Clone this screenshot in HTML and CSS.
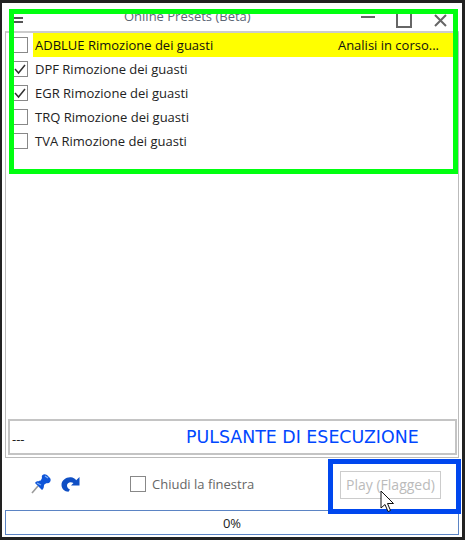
FILE: index.html
```html
<!DOCTYPE html>
<html lang="en">
<head>
  <meta charset="UTF-8">
  <meta name="viewport" content="width=device-width, initial-scale=1.0">
  <title>Online Presets (Beta)</title>
  <link rel="stylesheet" href="styles.css">
</head>
<body>

<div class="window">
  <!-- Title bar -->
  <div class="title-bar">
    <div class="menu-icon"><span></span><span></span></div>
    <div class="title">Online Presets (Beta)</div>
    <div class="win-buttons">
      <div class="win-min"></div>
      <div class="win-max"></div>
      <svg class="win-close" width="13" height="13" viewBox="0 0 13 13">
        <path d="M1 1L12 12M12 1L1 12" stroke="#666" stroke-width="2" fill="none"/>
      </svg>
    </div>
  </div>

  <!-- List and status -->
  <div class="panel">
    <div class="list">
      <div class="row active">
        <div class="check"></div>
        <div class="row-label"><span>ADBLUE Rimozione dei guasti</span><span>Analisi in corso...</span></div>
      </div>
      <div class="row">
        <div class="check">
          <svg width="14" height="14" viewBox="0 0 14 14"><path d="M2 7L5.5 11L12 3" stroke="#333" stroke-width="1.5" fill="none"/></svg>
        </div>
        <div class="row-label"><span>DPF Rimozione dei guasti</span></div>
      </div>
      <div class="row">
        <div class="check">
          <svg width="14" height="14" viewBox="0 0 14 14"><path d="M2 7L5.5 11L12 3" stroke="#333" stroke-width="1.5" fill="none"/></svg>
        </div>
        <div class="row-label"><span>EGR Rimozione dei guasti</span></div>
      </div>
      <div class="row">
        <div class="check"></div>
        <div class="row-label"><span>TRQ Rimozione dei guasti</span></div>
      </div>
      <div class="row">
        <div class="check"></div>
        <div class="row-label"><span>TVA Rimozione dei guasti</span></div>
      </div>
    </div>
    <div class="status">
      <span class="status-text">---</span>
      <span class="status-note">PULSANTE DI ESECUZIONE</span>
    </div>
  </div>

  <!-- Controls -->
  <div class="controls">
    <svg class="pin-icon" width="20" height="20" viewBox="0 0 20 20">
      <path d="M1 19L7 12" stroke="#9a9a9a" stroke-width="1.6" fill="none"/>
      <path d="M4 9C6 6 9 8 10 6L11 4C10 1 13 -1 16 1L19 4C21 7 18 10 16 9L14 10C12 11 14 14 11 16Z" fill="#0f55d8"/>
      <path d="M14 2L17 4" stroke="#7fb2f7" stroke-width="1.4" fill="none"/>
      <path d="M6 9L10 11" stroke="#7fb2f7" stroke-width="1.2" fill="none"/>
    </svg>
    <svg class="redo-icon" width="19" height="16" viewBox="0 0 19 16">
      <path d="M18.500 1V9.500H10L12.500 7C9 5 6 7 6 9.500C6 11.500 7.500 13 9 13.500L7.500 15.800C3.500 15.500 0.500 12.800 0.500 9C0.500 4 5.500 0.800 10 1.300C12 1.500 14 2.500 15.200 4.200Z" fill="#0f4fc4"/>
    </svg>
    <label class="close-option">
      <div class="check"></div>
      <span>Chiudi la finestra</span>
    </label>
    <button class="play-btn" disabled>Play (Flagged)</button>
  </div>

  <!-- Progress -->
  <div class="progress">0%</div>

  <!-- Annotations -->
  <div class="mark-green"></div>
  <div class="mark-blue"></div>
  <svg class="cursor" width="16" height="24" viewBox="0 0 16 24">
    <path d="M1 1V18L5 14.500L8 21.500L10.500 20.500L7.500 13.500H13.500Z" fill="#fff" stroke="#111" stroke-width="1"/>
  </svg>
</div>

</body>
</html>
```

FILE: styles.css
```css
/* Base */
html, body {
  margin: 0;
  height: 100%;
}

body {
  font-family: 'Open Sans', 'Liberation Sans', sans-serif;
  font-size: 13px;
  color: #222;
  background: #fff;
  overflow: hidden;
}

/* Window */
.window {
  position: relative;
  box-sizing: border-box;
  width: 465px;
  height: 540px;
  display: flex;
  flex-direction: column;
  padding: 0 3px 2px 3px;
  background: #fff;
  border-style: solid;
  border-color: #222;
  border-width: 3px 3px 3px 2px;
}

/* Title bar */
.title-bar {
  height: 28px;
  display: flex;
  align-items: center;
  flex-shrink: 0;
}

.menu-icon {
  width: 9px;
  margin-left: 9px;
  display: flex;
  flex-direction: column;
  gap: 2px;
  margin-top: 6px;
}

.menu-icon span {
  height: 2px;
  background: #555;
}

.title {
  margin-left: 101px;
  margin-top: -2px;
  color: #5c6675;
}

.win-buttons {
  margin-left: auto;
  display: flex;
  align-items: center;
  margin-right: 12px;
}

.win-min {
  width: 14px;
  height: 2px;
  background: #666;
  margin-top: -1px;
}

.win-max {
  box-sizing: border-box;
  width: 16px;
  height: 16px;
  border: 2px solid #666;
  margin-left: 21px;
  margin-top: 6px;
}

.win-close {
  margin-left: 22px;
  margin-top: 6px;
}

/* List panel */
.panel {
  flex: 1;
  display: flex;
  flex-direction: column;
  border: 1px solid #bbb;
  border-top: 2px solid #ccc;
  padding: 0 1px 2px 2px;
}

.list {
  flex: 1;
}

.row {
  display: flex;
  align-items: center;
  height: 24px;
  padding-left: 4px;
}

.check {
  box-sizing: border-box;
  width: 16px;
  height: 16px;
  border: 1px solid #888;
  background: #fff;
  flex-shrink: 0;
}

.check svg {
  display: block;
}

.row-label {
  flex: 1;
  height: 100%;
  display: flex;
  align-items: center;
  justify-content: space-between;
  margin-left: 5px;
  padding: 0 15px 0 2px;
  margin-right: 3px;
}

.active .row-label {
  background: #ffff00;
  color: #111;
}

/* Status */
.status {
  box-sizing: border-box;
  height: 36px;
  display: flex;
  align-items: center;
  border: 2px solid #c4c4c4;
  padding: 0 2px;
}

.status-text {
  width: 174px;
  margin-top: 4px;
}

.status-note {
  font-family: 'DejaVu Sans', sans-serif;
  font-size: 17.4px;
  color: #0047ff;
}

/* Controls */
.controls {
  height: 52px;
  display: flex;
  align-items: center;
  flex-shrink: 0;
  padding: 0 18px 0 26px;
}

.redo-icon {
  margin-left: 10px;
}

.close-option {
  display: flex;
  align-items: center;
  gap: 6px;
  margin-left: 50px;
  color: #666;
}

.play-btn {
  width: 101px;
  height: 28px;
  margin-left: auto;
  margin-top: 1px;
  background: #fff;
  border: 1px solid #ccc;
  color: #bbb;
  font-family: inherit;
  font-size: 14px;
  padding: 0;
}

/* Progress */
.progress {
  box-sizing: border-box;
  height: 25px;
  display: flex;
  align-items: center;
  justify-content: center;
  border: 1px solid #5b84c4;
  flex-shrink: 0;
}

/* Annotations over the screenshot */
.mark-green {
  position: absolute;
  left: 7px;
  top: 6px;
  width: 449px;
  height: 165px;
  box-sizing: border-box;
  border: 5px solid #00ff10;
}

.mark-blue {
  position: absolute;
  left: 326px;
  top: 456px;
  width: 133px;
  height: 55px;
  box-sizing: border-box;
  border: 5px solid #0047ee;
}

.cursor {
  position: absolute;
  left: 378px;
  top: 487px;
}
```
